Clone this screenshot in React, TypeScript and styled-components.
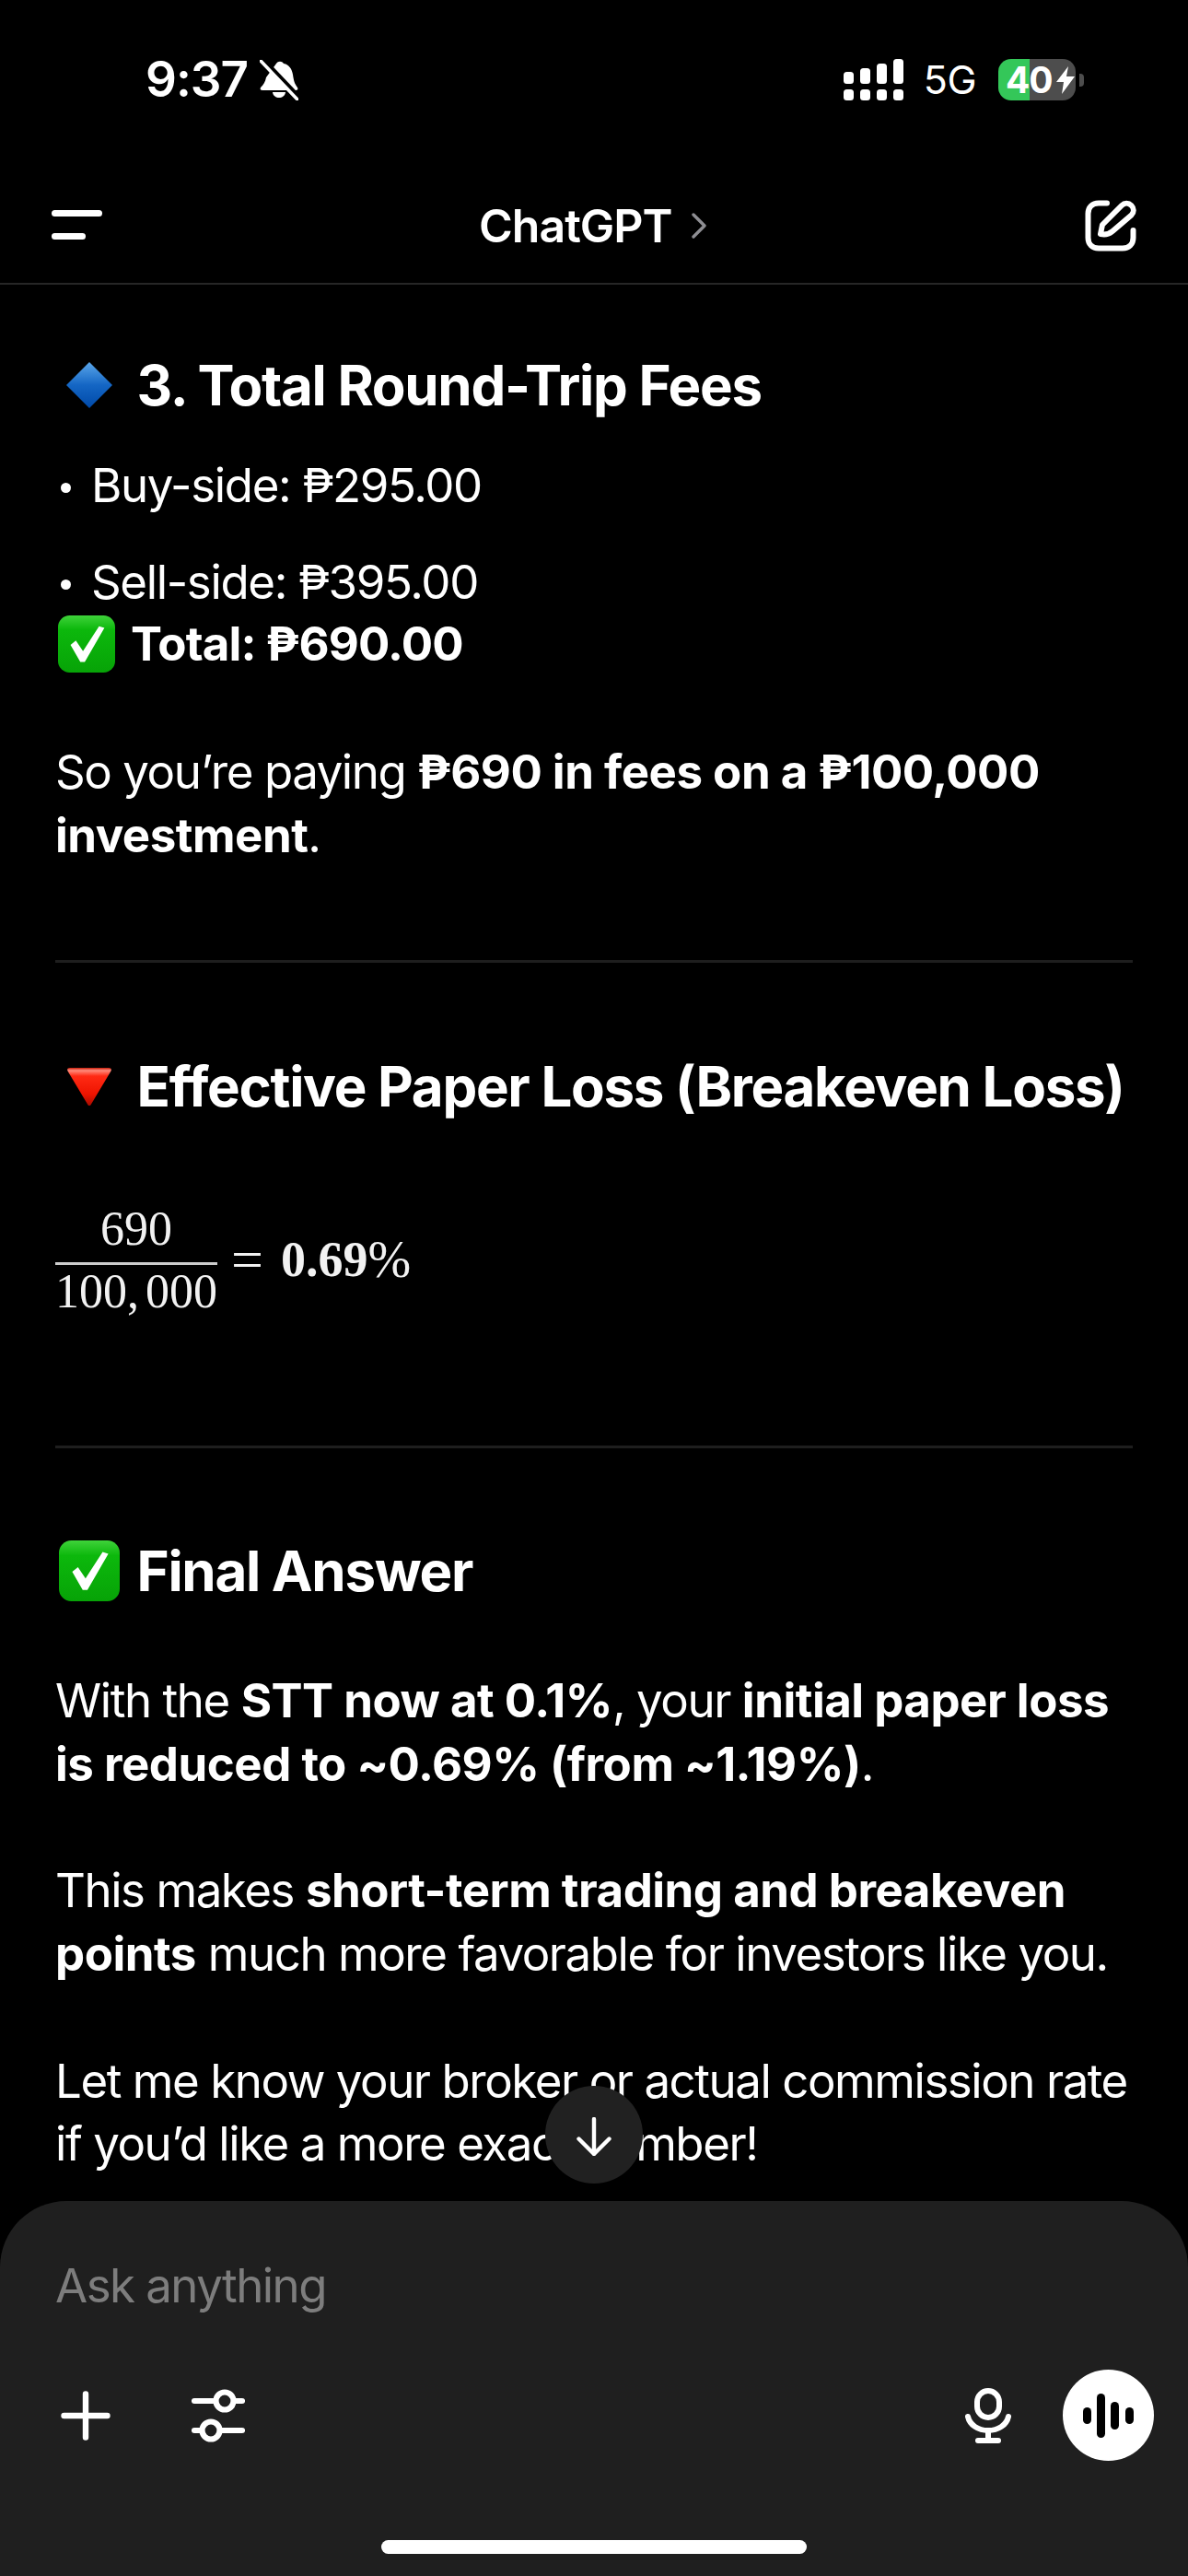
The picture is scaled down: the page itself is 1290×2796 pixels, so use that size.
import React from "react";
import styled, { createGlobalStyle } from "styled-components";

const Global = createGlobalStyle`
  html, body { margin: 0; padding: 0; background: #000; }
  * { box-sizing: border-box; }
`;

const Phone = styled.div`
  width: 1290px; height: 2796px; background: #000; color: #fff;
  display: flex; flex-direction: column; overflow: hidden; position: relative;
  font-family: Inter, "Noto Sans", sans-serif;
`;
const StatusBar = styled.div`
  height: 130px; flex: none; display: flex; justify-content: space-between; align-items: flex-start;
  padding: 64px 113px 0 158px;
`;
const StatusLeft = styled.div`display: flex; align-items: center; gap: 13px; height: 45px;`;
const Time = styled.span`font-size: 53px; font-weight: 600; letter-spacing: -1px; line-height: 45px;`;
const StatusRight = styled.div`display: flex; align-items: center; height: 45px;`;
const Network = styled.span`font-size: 43px; font-weight: 400; margin: 0 24px 0 22px; letter-spacing: -0.5px; line-height: 45px;`;
const Battery = styled.div`
  width: 84px; height: 45px; border-radius: 14px; overflow: hidden; position: relative;
  background: linear-gradient(90deg, #34c759 0 34px, #4d4d4d 34px);
  display: flex; align-items: center; padding-left: 8px;
  font-size: 39px; font-weight: 700; letter-spacing: -1px; line-height: 45px;
`;
const BatteryBolt = styled.svg`width: 20px; height: 30px; margin-left: 4px; flex: none;`;
const BatteryNub = styled.div`width: 5px; height: 14px; margin-left: 4px; background: #4d4d4d; border-radius: 0 4px 4px 0;`;

const NavBar = styled.div`
  height: 179px; flex: none; display: flex; align-items: flex-start; justify-content: space-between;
  padding: 87px 56px 0 56px; border-bottom: 2px solid #262626; position: relative;
`;
const NavTitle = styled.div`
  position: absolute; left: 520px; top: 87px; display: flex; align-items: center; gap: 20px; height: 56px;
  font-size: 50px; font-weight: 600; letter-spacing: -1px;
`;
const Menu = styled.div`display: flex; flex-direction: column; gap: 18px; margin-top: 11px;`;
const MenuBar = styled.div<{ $w: number }>`width: ${p => p.$w}px; height: 7px; background: #fff; border-radius: 4px;`;

const Content = styled.main`
  flex: 1; min-height: 0; overflow: hidden; padding: 73px 60px 0 60px; position: relative;
`;
const Heading = styled.h2<{ $top?: number; $bottom?: number }>`
  margin: ${p => p.$top ?? 0}px 0 ${p => p.$bottom ?? 0}px; padding-left: 4px;
  font-size: 60px; line-height: 72px; font-weight: 700; letter-spacing: -1.3px;
  display: flex; align-items: center; gap: 18.5px;
`;
const EmojiSlot = styled.span`width: 66px; flex: none; display: flex; align-items: center; justify-content: center;`;
const Bullet = styled.div`
  font-size: 51px; line-height: 69px; font-weight: 400; letter-spacing: -1.35px;
  display: flex; align-items: center; gap: 22px; margin-top: 38px; padding-left: 6px;
  & + & { margin-top: 36px; }
`;
const Dot = styled.span`width: 11px; height: 11px; border-radius: 50%; background: #fff; flex: none; margin-top: 6px;`;
const Para = styled.p<{ $bottom?: number }>`
  margin: 0 0 ${p => p.$bottom ?? 69}px; font-size: 51px; line-height: 68.6px; font-weight: 400; letter-spacing: -1.45px;
  strong { font-weight: 700; letter-spacing: -0.5px; }
`;
const TotalRow = styled.div`
  font-size: 51px; line-height: 69px; font-weight: 700; letter-spacing: -0.85px;
  display: flex; align-items: center; gap: 17px; margin: -2px 0 71px; padding-left: 3px;
`;
const Rule = styled.hr<{ $top?: number }>`border: 0; height: 3px; background: #1e1e1e; margin: ${p => p.$top ?? 0}px 0 0; width: 1170px;`;
const MathBlock = styled.div`
  display: flex; align-items: center; font-family: "Liberation Serif", "Times New Roman", serif;
  font-size: 52px; color: #f2f2f2; margin-top: 88px;
`;
const Frac = styled.div`display: flex; flex-direction: column; align-items: center; width: 176px;`;
const Num = styled.span`line-height: 62px; height: 67px;`;
const Den = styled.span`line-height: 58px; height: 58px; white-space: pre; word-spacing: -6px;`;
const FracLine = styled.div`width: 100%; height: 3px; background: #ccc;`;
const Equals = styled.span`margin: 0 19px 0 15px; font-size: 62px; line-height: 62px;`;
const MathBold = styled.span`font-weight: 700; font-size: 54px;`;
const MathPct = styled.span`font-size: 56px; font-weight: 400;`;

const ScrollDown = styled.div`
  position: absolute; left: 592px; top: 2264px; width: 106px; height: 106px; border-radius: 50%;
  background: #212121; display: flex; align-items: center; justify-content: center; padding-top: 3px;
`;
const Composer = styled.footer`
  position: absolute; left: 0; right: 0; top: 2389px; bottom: 0; background: #1f1f1f;
  border-radius: 72px 72px 0 0; padding: 57px 37px 0 60px; display: flex; flex-direction: column;
`;
const Placeholder = styled.div`font-size: 51px; line-height: 69px; color: #7d7d7d; letter-spacing: -1.55px;`;
const ActionRow = styled.div`display: flex; align-items: center; margin-top: 57px; height: 99px;`;
const IconSlot = styled.div<{ $ml?: number }>`display: flex; margin-left: ${p => p.$ml ?? 0}px;`;
const Spacer = styled.div`flex: 1;`;
const VoiceButton = styled.div`
  width: 99px; height: 99px; border-radius: 50%; background: #fff; margin-left: 56px;
  display: flex; align-items: center; justify-content: center;
`;
const HomeBar = styled.div`
  position: absolute; left: 414px; top: 368px; width: 462px; height: 15px; border-radius: 8px; background: #fff;
`;

const Signal = () => (
  <svg width="65" height="45" viewBox="0 0 65 45" fill="#fff">
    <rect x="0" y="14" width="11" height="13" rx="3.5" />
    <rect x="18" y="10" width="11" height="17" rx="3.5" />
    <rect x="36" y="5" width="11" height="22" rx="3.5" />
    <rect x="54" y="0" width="11" height="27" rx="3.5" />
    <rect x="0" y="33" width="11" height="12" rx="3.5" />
    <rect x="18" y="33" width="11" height="12" rx="3.5" />
    <rect x="36" y="33" width="11" height="12" rx="3.5" />
    <rect x="54" y="33" width="11" height="12" rx="3.5" />
  </svg>
);
const BellOff = () => (
  <svg width="42" height="44" viewBox="0 0 42 44" fill="#fff">
    <path d="M18 4c2-3 6-3 8 0 6 1 9 6 10 12 1 7 2 10 5 14 1 2 0 3-2 3H3c-2 0-3-1-2-3 3-3 5-6 6-11z" />
    <path d="M14 35h14c-1 8-13 8-14 0z" />
    <path d="M5 1L42 40" stroke="#000" strokeWidth="5" />
    <path d="M1 1L41 43" stroke="#fff" strokeWidth="3.6" strokeLinecap="round" />
  </svg>
);
const Chevron = () => (
  <svg width="18" height="28" viewBox="0 0 18 28" fill="none">
    <path d="M3 2l12 12L3 26" stroke="#8e8e93" strokeWidth="3.4" strokeLinecap="round" strokeLinejoin="round" />
  </svg>
);
const EditIcon = () => (
  <svg width="56" height="56" viewBox="0 0 56 56" fill="none" stroke="#fff" strokeWidth="6" strokeLinecap="round" strokeLinejoin="round">
    <path d="M24 3.500H15C8 3.500 3.500 8 3.500 15v26c0 7 4.500 11.500 11.500 11.500h26c7 0 11.500-4.500 11.500-11.500V33" />
    <path d="M17 37l2-10L40 6c3-3 7.500-3 10.500 0s3 7.500 0 10.500L30 34c-4 3.500-8 4-13 3z" />
  </svg>
);
const CheckEmoji = ({ size }: { size: number }) => (
  <svg width={size} height={size} viewBox="0 0 64 64">
    <defs>
      <linearGradient id="chk" x1="0" y1="0" x2="0" y2="1">
        <stop offset="0" stopColor="#3fd23a" />
        <stop offset="0.25" stopColor="#0cb80c" />
        <stop offset="1" stopColor="#07a307" />
      </linearGradient>
    </defs>
    <rect x="0" y="0" width="64" height="64" rx="13" fill="url(#chk)" />
    <path d="M14 33l6-5 8 12L46 12l6 2-22 38h-5z" fill="#fff" />
  </svg>
);
const DiamondEmoji = () => (
  <svg width="50" height="50" viewBox="0 0 50 50">
    <defs>
      <linearGradient id="dia" x1="0" y1="0" x2="0" y2="1">
        <stop offset="0" stopColor="#5aa6ea" />
        <stop offset="0.5" stopColor="#1466c4" />
        <stop offset="1" stopColor="#0049a8" />
      </linearGradient>
    </defs>
    <path d="M25 0L50 25 25 50 0 25z" fill="url(#dia)" />
  </svg>
);
const TriangleEmoji = () => (
  <svg width="48" height="41" viewBox="0 0 48 41">
    <defs>
      <linearGradient id="tri" x1="0" y1="0" x2="0" y2="1">
        <stop offset="0" stopColor="#c81a08" />
        <stop offset="0.07" stopColor="#ff8c7c" />
        <stop offset="0.22" stopColor="#ff2a14" />
        <stop offset="0.7" stopColor="#ee1400" />
        <stop offset="1" stopColor="#a80c00" />
      </linearGradient>
    </defs>
    <path d="M3 0h42c2.500 0 3.500 1.500 2.500 3.500L26 39.500c-1 2-3 2-4 0L.5 3.500C-.5 1.500.5 0 3 0z" fill="url(#tri)" />
  </svg>
);
const ArrowDown = () => (
  <svg width="38" height="42" viewBox="0 0 38 42" fill="none" stroke="#fff" strokeWidth="4.400" strokeLinecap="round" strokeLinejoin="round">
    <path d="M19 2v38M2.500 23.500L19 40l16.500-16.500" />
  </svg>
);
const PlusIcon = () => (
  <svg width="54" height="54" viewBox="0 0 54 54" fill="none" stroke="#fff" strokeWidth="6.400" strokeLinecap="round">
    <path d="M27 3.500v47M3.500 27h47" />
  </svg>
);
const SlidersIcon = () => (
  <svg width="58" height="58" viewBox="0 0 58 58" fill="none" stroke="#fff" strokeWidth="6.200" strokeLinecap="round">
    <path d="M3 13h23M46 13h9M3 45h8M31 45h24" />
    <circle cx="36" cy="13" r="9.500" />
    <circle cx="21" cy="45" r="9.500" />
  </svg>
);
const MicIcon = () => (
  <svg width="50" height="60" viewBox="0 0 50 60" fill="none" stroke="#fff" strokeWidth="6" strokeLinecap="round">
    <rect x="13" y="3" width="24" height="29" rx="12" />
    <path d="M3 31c2 9 11 15 22 15s20-6 22-15M25 46v11M14 57h22" />
  </svg>
);
const VoiceIcon = () => (
  <svg width="55" height="48" viewBox="0 0 55 48" fill="#000">
    <rect x="0" y="15" width="9" height="18" rx="4.500" />
    <rect x="15" y="0" width="9" height="48" rx="4.500" />
    <rect x="30" y="9" width="9" height="30" rx="4.500" />
    <rect x="46" y="15" width="9" height="18" rx="4.500" />
  </svg>
);

export default function App() {
  return (
    <>
      <Global />
      <Phone>
        <StatusBar>
          <StatusLeft><Time>9:37</Time><BellOff /></StatusLeft>
          <StatusRight>
            <Signal />
            <Network>5G</Network>
            <Battery>
              40
              <BatteryBolt viewBox="0 0 20 30"><path d="M13 0L0 17h8l-2 13L20 11h-9z" fill="#fff" /></BatteryBolt>
            </Battery>
            <BatteryNub />
          </StatusRight>
        </StatusBar>
        <NavBar>
          <Menu><MenuBar $w={55} /><MenuBar $w={37} /></Menu>
          <NavTitle>ChatGPT <Chevron /></NavTitle>
          <EditIcon />
        </NavBar>
        <Content>
          <Heading><EmojiSlot><DiamondEmoji /></EmojiSlot>3. Total Round-Trip Fees</Heading>
          <Bullet><Dot />Buy-side: ₱295.00</Bullet>
          <Bullet><Dot />Sell-side: ₱395.00</Bullet>
          <TotalRow><CheckEmoji size={62} />Total: ₱690.00</TotalRow>
          <Para $bottom={101}>So you’re paying <strong>₱690 in fees on a ₱100,000 investment</strong>.</Para>
          <Rule />
          <Heading $top={98}><EmojiSlot><TriangleEmoji /></EmojiSlot>Effective Paper Loss (Breakeven Loss)</Heading>
          <MathBlock>
            <Frac>
              <Num>690</Num>
              <FracLine />
              <Den>100, 000</Den>
            </Frac>
            <Equals>=</Equals>
            <MathBold>0.69</MathBold>
            <MathPct>%</MathPct>
          </MathBlock>
          <Rule $top={138} />
          <Heading $top={97} $bottom={71}><EmojiSlot><CheckEmoji size={66} /></EmojiSlot>Final Answer</Heading>
          <Para>With the <strong>STT now at 0.1%</strong>, your <strong>initial paper loss is reduced to ~0.69% (from ~1.19%)</strong>.</Para>
          <Para>This makes <strong>short-term trading and breakeven points</strong> much more favorable for investors like you.</Para>
          <Para>Let me know your broker or actual commission rate if you’d like a more exact number!</Para>
        </Content>
        <ScrollDown><ArrowDown /></ScrollDown>
        <Composer>
          <Placeholder>Ask anything</Placeholder>
          <ActionRow>
            <IconSlot $ml={6}><PlusIcon /></IconSlot>
            <IconSlot $ml={88}><SlidersIcon /></IconSlot>
            <Spacer />
            <MicIcon />
            <VoiceButton><VoiceIcon /></VoiceButton>
          </ActionRow>
          <HomeBar />
        </Composer>
      </Phone>
    </>
  );
}
